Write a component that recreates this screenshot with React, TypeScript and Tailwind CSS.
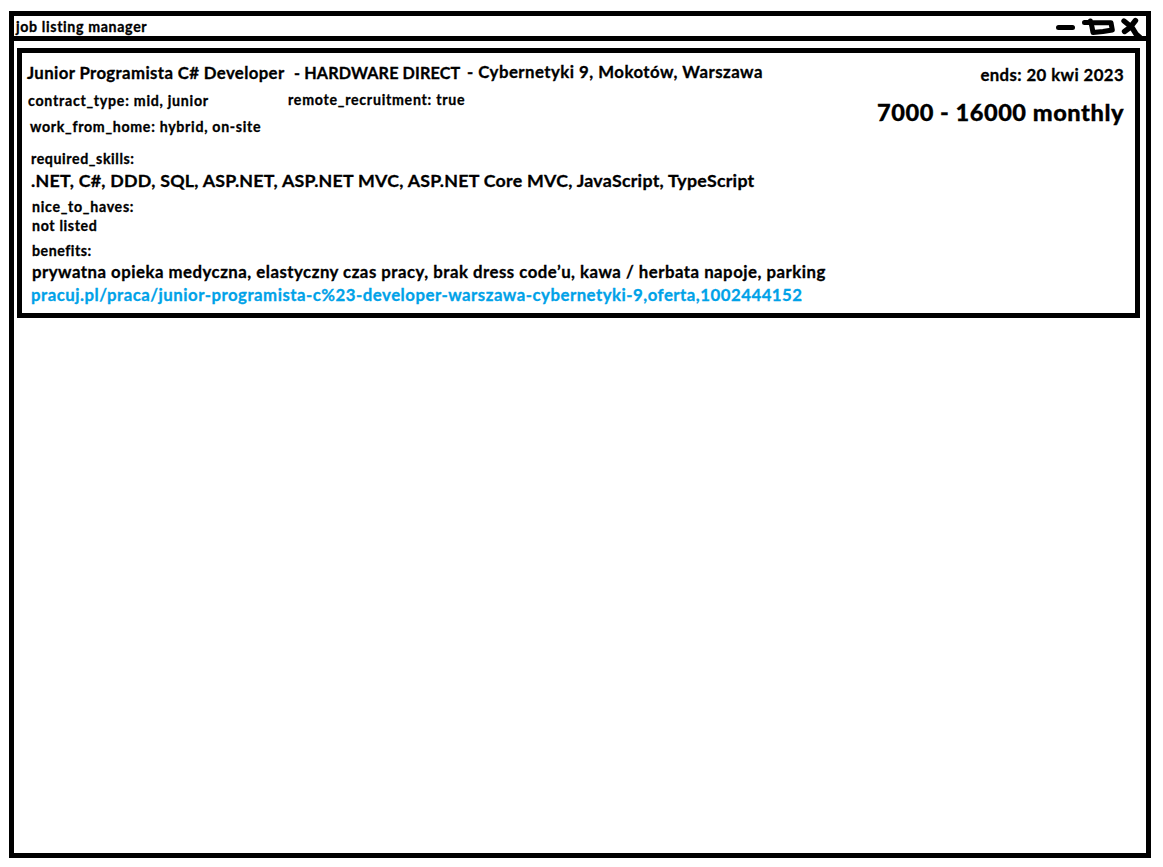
const small = "text-[14.2px] leading-[18px]";
const medium = "text-[16.8px] leading-[18px]";

function WindowControls() {
  return (
    <svg
      width="91"
      height="25"
      viewBox="1055 16 91 25"
      fill="none"
      stroke="black"
      strokeWidth="5"
      strokeLinecap="round"
      strokeLinejoin="round"
    >
      <path d="M1058.5 27.5H1072.5" />
      <path d="M1084.5 22.5H1091L1111 22.7L1112.3 30L1103 31.5L1093 32.5L1092 27L1090.5 21" />
      <path d="M1124 21L1132 27.5L1136 34L1140 37.5M1135.5 20.5L1130 27.5L1124.5 31.5" strokeWidth="5.4" />
    </svg>
  );
}

function TitleBar() {
  return (
    <header className="-mr-[5px] box-content flex h-[20px] shrink-0 items-start justify-between border-b-[5px] border-black">
      <h1 className="ml-[2px] mt-[2px] text-[14.2px] leading-[18px] tracking-[0.65px]">job listing manager</h1>
      <div className="mr-[5px] h-[25px] shrink-0">
        <WindowControls />
      </div>
    </header>
  );
}

function JobCard() {
  return (
    <article className="ml-[3px] mr-[6px] mt-[7px] flex h-[270px] justify-between border-[5px] border-black">
      <div className="flex flex-col items-start whitespace-pre pl-[5px] pt-[10px]">
        <div className={`flex items-start ${medium}`}>
          <h2 className="mt-px w-[267px] tracking-[0.37px]">Junior Programista C# Developer</h2>
          <span className="mt-px w-[173px] text-[16.2px] tracking-[0.12px]">- HARDWARE DIRECT</span>
          <span className="tracking-[0.47px]">- Cybernetyki 9, Mokotów, Warszawa</span>
        </div>
        <div className={`mt-[9px] flex items-start pl-[1px] ${small}`}>
          <span className="mt-px w-[260px] tracking-[0.74px]">contract_type: mid, junior</span>
          <span className="tracking-[0.74px]">remote_recruitment: true</span>
        </div>
        <div className={`mt-[8px] pl-[3px] tracking-[0.7px] ${small}`}>work_from_home: hybrid, on-site</div>
        <div className={`mt-[14px] pl-[4px] tracking-[0.6px] ${small}`}>required_skills:</div>
        <p className="mt-[3px] pl-[4px] text-[17.8px] leading-[18px] tracking-[0.255px]">
          .NET, C#, DDD, SQL, ASP.NET, ASP.NET MVC, ASP.NET Core MVC, JavaScript, TypeScript
        </p>
        <div className={`mt-[9px] pl-[5px] tracking-[0.71px] ${small}`}>nice_to_haves:</div>
        <p className={`mt-[1px] pl-[5px] tracking-[0.66px] ${small}`}>not listed</p>
        <div className={`mt-[7px] pl-[5px] tracking-[0.52px] ${small}`}>benefits:</div>
        <p className={`mt-[3px] pl-[5px] tracking-[0.49px] ${medium}`}>
          prywatna opieka medyczna, elastyczny czas pracy, brak dress code’u, kawa / herbata napoje, parking
        </p>
        <a className={`mt-[5px] pl-[4px] tracking-[0.495px] text-[#00a2e8] ${medium}`}>
          pracuj.pl/praca/junior-programista-c%23-developer-warszawa-cybernetyki-9,oferta,1002444152
        </a>
      </div>
      <div className="flex flex-col items-end whitespace-nowrap pr-[11px] pt-[13px]">
        <span className={`tracking-[0.39px] ${medium}`}>ends: 20 kwi 2023</span>
        <strong className="mt-[14px] text-[23.6px] leading-[28px] tracking-[0.53px]">7000 - 16000 monthly</strong>
      </div>
    </article>
  );
}

export default function App() {
  return (
    <div className="h-[867px] w-[1163px] overflow-hidden bg-white pl-[9px] pt-[11px] font-[Lato,sans-serif] font-bold text-black [-webkit-text-stroke:0.3px]">
      <main className="flex h-[847px] w-[1142px] flex-col border-[5px] border-black">
        <TitleBar />
        <JobCard />
      </main>
    </div>
  );
}
